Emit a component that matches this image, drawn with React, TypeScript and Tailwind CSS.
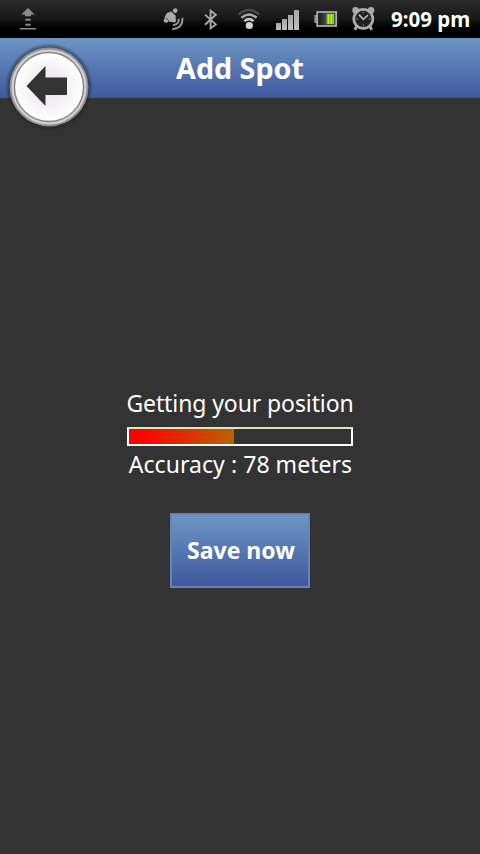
const ACCURACY_METERS = 78;
const PROGRESS = 47.5;

function UploadIcon() {
  return (
    <svg className="h-6 w-4" viewBox="0 0 16 24" fill="#8b8b8b">
      <path d="M8 0L14.7 6.6H11V8.2H5V6.6H1.3Z" />
      <path d="M5.3 10.8h5.4v2H5.3zM5.3 15.8h5.4v2H5.3zM0 20h16v1.6H0z" />
    </svg>
  );
}

function GpsIcon() {
  return (
    <svg className="h-6 w-6" viewBox="0 0 24 24">
      <g fill="#aaa">
        <path d="M8.2 3.4L12.6 7.4L13 13.2L11.6 14.4L5.6 13.4L1.4 9.2L4 5Z" />
        <circle cx="12.2" cy="2.6" r="2.3" />
        <circle cx="3" cy="12.4" r="2.3" />
      </g>
      <path d="M9.4 3.6L12.6 6.6M2.6 9.6L5.8 12.8" stroke="#333" strokeWidth="0.8" />
      <g fill="none" stroke="#929292" strokeWidth="2">
        <path d="M15.8 10.8Q16 16.8 9.8 17.3" />
        <path d="M19.4 9.8Q20.2 20.2 9.2 21.2" />
      </g>
    </svg>
  );
}

function BluetoothIcon() {
  return (
    <svg className="h-6 w-4" viewBox="0 0 16 24" fill="none" stroke="#aaa" strokeWidth="1.9">
      <path d="M2 6.6L12.8 16.4L7.6 20.4V2.8L12.8 6.8L2 16.8" />
    </svg>
  );
}

function WifiIcon() {
  return (
    <svg className="h-6 w-6" viewBox="0 0 24 24" fill="none" strokeWidth="2.5">
      <path d="M1.7 6.4Q12 -2.4 22.3 6.4" stroke="#4c4c4c" />
      <path d="M4.4 9.8Q12 3.2 19.6 9.8" stroke="#aaa" />
      <path d="M7.4 13.1Q12 9.2 16.6 13.1" stroke="#c5c5c5" />
      <circle cx="12.3" cy="17.5" r="3.6" fill="#d4d4d4" />
    </svg>
  );
}

function SignalIcon() {
  return (
    <svg className="h-6 w-6" viewBox="0 0 24 24">
      <defs>
        <linearGradient id="bars" x1="0" y1="0" x2="0" y2="1">
          <stop offset="0" stopColor="#a5a5a5" />
          <stop offset="1" stopColor="#c0c0c0" />
        </linearGradient>
      </defs>
      <g fill="url(#bars)">
        <path d="M0 15h5v7H0z" />
        <path d="M6 11h5v11H6z" />
        <path d="M12 7h5v15h-5z" />
        <path d="M18 2h5v20h-5z" />
      </g>
    </svg>
  );
}

function BatteryIcon() {
  return (
    <svg className="h-6 w-6" viewBox="0 0 24 24">
      <defs>
        <linearGradient id="charge" x1="0" x2="1" y1="0" y2="0">
          <stop offset="0" stopColor="#111" />
          <stop offset="0.5" stopColor="#4b4b4b" />
        </linearGradient>
      </defs>
      <path d="M0.3 7h3v8h-3z" fill="#8f8f8f" />
      <rect x="3.2" y="4" width="19" height="14" fill="url(#charge)" stroke="#a8a8a8" strokeWidth="1.8" />
      <path d="M12.6 6h7.4v10h-7.4z" fill="#85d00c" />
      <path d="M14.6 6v10M17.4 6v10" stroke="#c0f040" strokeWidth="0.9" />
    </svg>
  );
}

function AlarmIcon() {
  return (
    <svg className="h-6 w-6" viewBox="0 0 24 24">
      <g fill="#a8a8a8">
        <circle cx="4.6" cy="3.4" r="3.3" />
        <circle cx="20" cy="3.4" r="3.3" />
      </g>
      <path d="M5.8 19L3.9 22.8M18.8 19L20.7 22.8" stroke="#a8a8a8" strokeWidth="3" />
      <circle cx="12.3" cy="11.9" r="9.5" fill="#202020" stroke="#acacac" strokeWidth="2.7" />
      <path d="M8 7.6L12.3 12.4L17 8.2" fill="none" stroke="#b5b5b5" strokeWidth="1.7" />
      <path d="M12.3 4.8v1.6M12.3 17.6v1.6M5.2 12h1.6M17.8 12h1.6" stroke="#999" />
    </svg>
  );
}

function StatusBar() {
  return (
    <div className="flex h-[38px] items-start bg-linear-to-b from-[#2c2c2c] via-[#171717] to-black to-90% pt-2 pl-5">
      <UploadIcon />
      <div className="ml-[127px] flex">
        <GpsIcon />
        <div className="ml-4">
          <BluetoothIcon />
        </div>
        <div className="ml-[18px]">
          <WifiIcon />
        </div>
        <div className="ml-[15px]">
          <SignalIcon />
        </div>
        <div className="ml-3.5">
          <BatteryIcon />
        </div>
        <div className="-mt-px ml-[13px]">
          <AlarmIcon />
        </div>
      </div>
      <span className="-mt-px ml-4 text-[20.5px] leading-6 font-bold whitespace-nowrap text-white">9:09 pm</span>
    </div>
  );
}

function BackButton() {
  return (
    <button type="button" aria-label="Back" className="absolute top-[5px] left-[5px] h-[88px] w-[88px]">
      <svg className="h-full w-full" viewBox="0 0 88 88">
        <defs>
          <radialGradient id="shade">
            <stop offset="0.88" stopColor="#222" stopOpacity="0.65" />
            <stop offset="1" stopColor="#222" stopOpacity="0" />
          </radialGradient>
          <radialGradient id="face">
            <stop offset="0.4" stopColor="#f0ecf0" />
            <stop offset="1" stopColor="#fff" />
          </radialGradient>
        </defs>
        <circle cx="44" cy="44" r="44" fill="url(#shade)" />
        <circle cx="44" cy="44" r="38.2" fill="#bbb" stroke="#929292" strokeWidth="2.4" />
        <circle cx="44" cy="44" r="36.5" fill="none" stroke="#d2d0d2" strokeWidth="2" />
        <circle cx="44" cy="44" r="34.5" fill="url(#face)" stroke="#858385" strokeWidth="1.3" />
        <path d="M21.5 43L40.5 23V34.5H62V52H40.5V63Z" fill="#333" />
      </svg>
    </button>
  );
}

function Header() {
  return (
    <header className="relative flex h-[60px] items-center justify-center bg-linear-to-b from-[#6e95c5] to-[#40599e]">
      <BackButton />
      <h1 className="text-[28.7px] leading-[60px] font-bold text-white">Add Spot</h1>
    </header>
  );
}

function ProgressBar({ value }: { value: number }) {
  return (
    <div className="h-[19px] w-[226px] border-2 border-t-[#e3e5b5] border-r-white border-b-white border-l-white">
      <div className="h-full bg-linear-to-r/srgb from-[#ff0000] from-10% to-[#b96300]" style={{ width: `${value}%` }} />
    </div>
  );
}

export default function App() {
  return (
    <div className="flex h-[854px] w-[480px] flex-col overflow-hidden bg-[#333] font-['Noto_Sans',sans-serif]">
      <StatusBar />
      <Header />
      <main className="flex flex-1 flex-col items-center pt-[289px] text-white">
        <p className="text-[23px] leading-8 tracking-[-0.1px] whitespace-nowrap">Getting your position</p>
        <div className="mt-2">
          <ProgressBar value={PROGRESS} />
        </div>
        <p className="mt-0.5 pl-px text-[23px] leading-8 tracking-[0.05px] whitespace-nowrap">
          Accuracy : {ACCURACY_METERS} meters
        </p>
        <button
          type="button"
          className="mt-[33px] h-[75px] w-[140px] border-2 border-[#6585b8] bg-linear-to-b from-[#6e95c3] to-[#40599e] pl-0.5 text-[23px] font-bold whitespace-nowrap"
        >
          Save now
        </button>
      </main>
    </div>
  );
}
